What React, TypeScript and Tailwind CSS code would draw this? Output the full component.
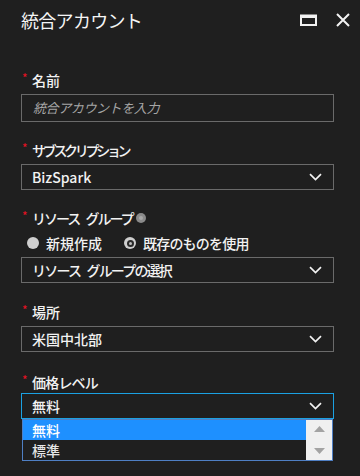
import React from 'react';

const font = { fontFamily: '"Noto Sans CJK JP", "Noto Sans", sans-serif' };

const Chevron: React.FC = () => (
  <svg width="13" height="8" viewBox="0 0 13 8" className="shrink-0">
    <path d="M1 1.2 L6.5 6.5 L12 1.2" fill="none" stroke="#f2f2f2" strokeWidth="1.7" />
  </svg>
);

const Label: React.FC<{ text: string; tracking?: string; children?: React.ReactNode }> = ({ text, tracking, children }) => (
  <div className="flex h-4 items-center">
    <span className="relative -top-[2px] w-[11px] pl-px text-[12px] leading-none text-[#e81123]">*</span>
    <span className={`text-[14px] font-medium text-[#f2f2f2] ${tracking ?? ''}`}>{text}</span>
    {children}
  </div>
);

const Select: React.FC<{ value: string; focused?: boolean; tracking?: string; className?: string }> = ({
  value,
  focused,
  tracking,
  className,
}) => (
  <div
    className={`flex h-[26px] items-center justify-between pl-[10px] pr-[11px] ${
      focused ? 'border border-[#1ba1e2]' : 'border border-[#6a6a6a]'
    } ${className ?? ''}`}
  >
    <span className={`text-[14px] font-medium text-[#f2f2f2] ${tracking ?? ''}`}>{value}</span>
    <Chevron />
  </div>
);

const Radio: React.FC<{ label: string; checked?: boolean; tracking?: string }> = ({ label, checked, tracking }) => (
  <div className="flex items-center gap-[7px]">
    <span className="flex h-[12px] w-[12px] items-center justify-center rounded-full bg-[#cfcfcf]">
      {checked && (
        <span className="flex h-[7px] w-[7px] items-center justify-center rounded-full bg-[#2a2a2a]">
          <span className="h-[3px] w-[3px] rounded-full bg-[#bdbdbd]" />
        </span>
      )}
    </span>
    <span className={`text-[14px] font-medium text-[#f2f2f2] ${tracking ?? ''}`}>{label}</span>
  </div>
);

export default function App() {
  return (
    <div className="h-[476px] w-[360px] overflow-hidden bg-[#1f1f1f]" style={font}>
      <div className="flex h-[40px] items-center justify-between pl-[21px] pr-[9px]">
        <h1 className="text-[18px] font-normal tracking-[-0.7px] text-[#f5f5f5]">統合アカウント</h1>
        <div className="flex items-center gap-[18px]">
          <svg width="17" height="12" viewBox="0 0 17 12">
            <rect x="1" y="1.5" width="15" height="9.5" fill="none" stroke="#f2f2f2" strokeWidth="2" />
            <rect x="1" y="1" width="15" height="3" fill="#f2f2f2" />
          </svg>
          <svg width="16" height="14" viewBox="0 0 16 14">
            <path d="M2 1 L14 13 M14 1 L2 13" stroke="#f2f2f2" strokeWidth="2" />
          </svg>
        </div>
      </div>

      <div className="pl-[21px] pr-[26px] pt-[32px]">
        <Label text="名前" />
        <div className="mt-[6px] flex h-[28px] items-center border border-[#6a6a6a] pl-[11px]">
          <span className="text-[13px] italic tracking-[-0.4px] text-[#a6a6a6]">統合アカウントを入力</span>
        </div>

        <div className="mt-[20px]">
          <Label text="サブスクリプション" tracking="tracking-[-3.3px]" />
          <Select value="BizSpark" className="mt-[6px]" />
        </div>

        <div className="mt-[20px]">
          <Label text="リソース グループ" tracking="tracking-[-2px] [word-spacing:5px]">
            <span className="ml-[3px] flex h-[10px] w-[10px] items-center justify-center rounded-full bg-[#8a8a8a]">
              <span className="h-[4px] w-[4px] rounded-full bg-[#a8a8a8]" />
            </span>
          </Label>
          <div className="mt-[9px] flex h-4 items-center gap-[22px] pl-[6px]">
            <Radio label="新規作成" />
            <Radio label="既存のものを使用" checked tracking="tracking-[-0.8px]" />
          </div>
          <Select value="リソース グループの選択" tracking="tracking-[-1.8px] [word-spacing:5px]" className="mt-[6px]" />
        </div>

        <div className="mt-[21px]">
          <Label text="場所" />
          <Select value="米国中北部" className="mt-[6px]" />
        </div>

        <div className="relative mt-[22px]">
          <Label text="価格レベル" tracking="tracking-[-0.8px]" />
          <Select value="無料" focused className="mt-[3px]" />
          <div className="absolute left-px right-px top-[45px] flex border border-[#4f7fc4] bg-[#1f1f1f]">
            <div className="flex-1">
              <div className="flex h-[20px] items-center bg-[#1e90ff] pl-[9px] text-[14px] font-medium text-white">無料</div>
              <div className="flex h-[20px] items-center pl-[9px] text-[14px] font-medium text-[#e6e6e6]">標準</div>
            </div>
            <div className="flex w-[26px] flex-col items-center justify-between bg-[#f0f0f0] py-[6px]">
              <svg width="11" height="6" viewBox="0 0 11 6">
                <path d="M0 6 L5.5 0 L11 6 Z" fill="#a3a3a3" />
              </svg>
              <svg width="11" height="6" viewBox="0 0 11 6">
                <path d="M0 0 L5.5 6 L11 0 Z" fill="#a3a3a3" />
              </svg>
            </div>
          </div>
        </div>
      </div>
    </div>
  );
}
